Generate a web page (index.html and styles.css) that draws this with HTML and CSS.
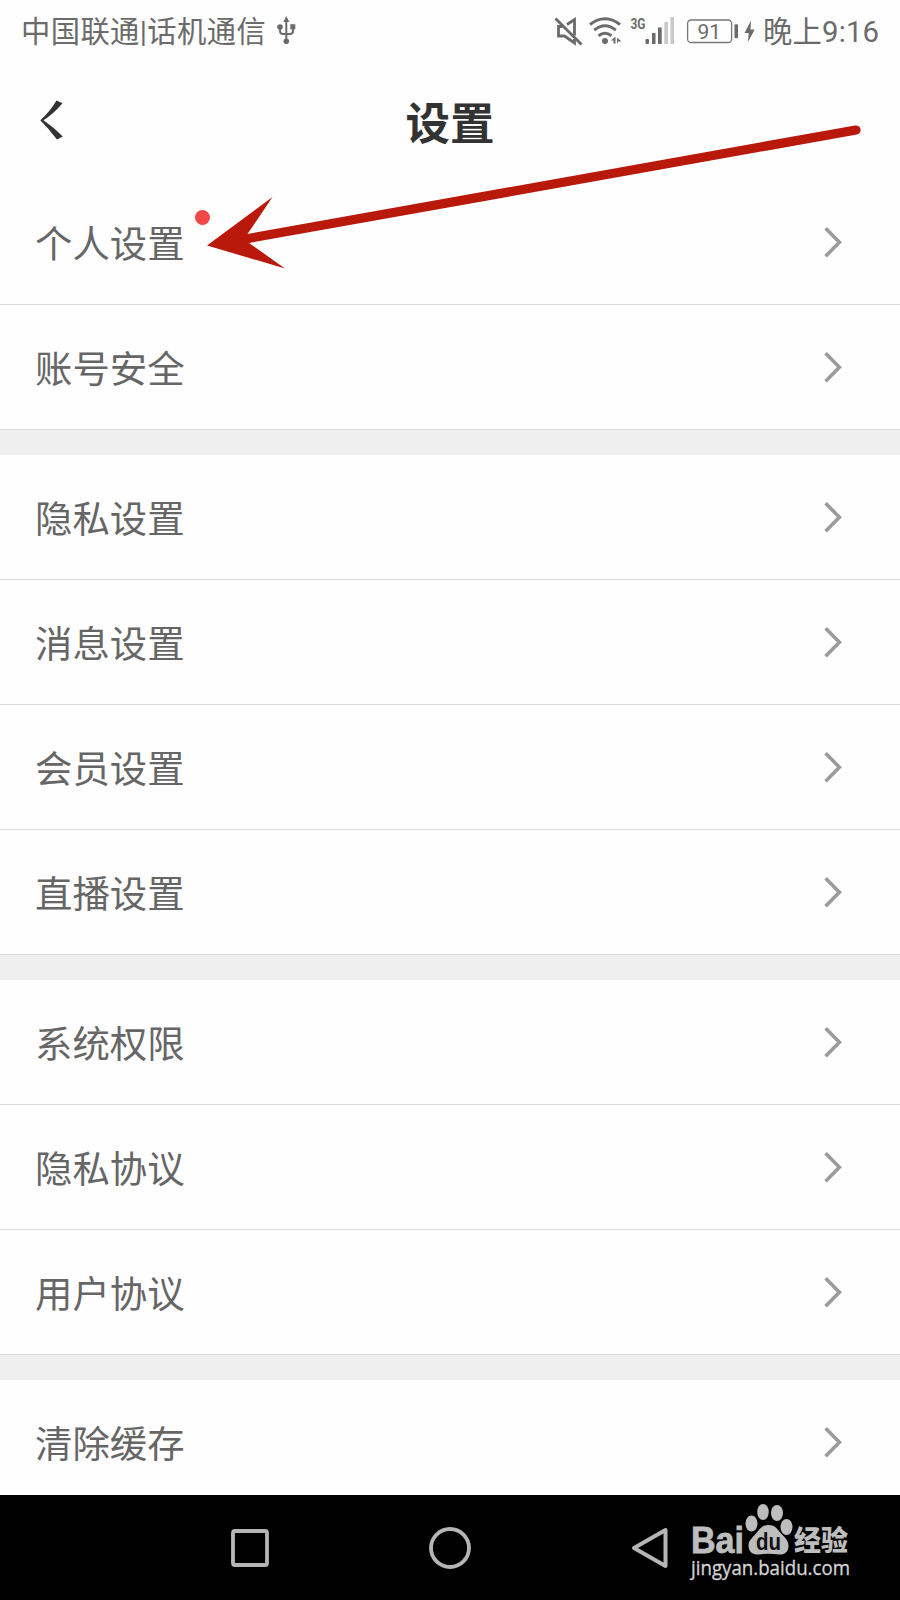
FILE: index.html
```
<!DOCTYPE html>
<html lang="zh-CN">
<head>
<meta charset="utf-8">
<title>设置</title>
<link rel="stylesheet" href="styles.css">
</head>
<body>
<svg class="defs" width="0" height="0"><symbol id="chev" viewBox="0 0 20 34"><path d="M1.600 3.200 15.400 17.200 1.600 31.200" fill="none" stroke="#9b9b9b" stroke-width="3.600"/></symbol></svg>
<div class="screen">
  <header class="status">
    <span class="carrier">中国联通|话机通信</span>
    <svg class="usb" viewBox="276 15 22 32" width="22" height="32" fill="none" stroke="#6b6b6b" stroke-width="2"><path d="M286.3 41V19M280 27v4q0 3 3 3h7q3 0 3-3v-4"/><g fill="#6b6b6b" stroke="none"><path d="M286.3 16l3 6h-6zM290.3 24.200h5v5h-5z"/><circle cx="280" cy="27" r="2.800"/><circle cx="286.300" cy="41.300" r="2.800"/></g></svg>
    <svg class="signals" viewBox="550 10 210 40" width="210" height="40">
      <g fill="none" stroke="#6b6b6b" stroke-width="2.800"><path d="M555.500 17.500 581.500 43.500"/><path d="M567 23.500l7.500-5V34.500M562.500 25.500h-4v9.500h6l10 7V38"/>
      <path d="M590 23.500q15-11.500 30 0M594.200 29.200q10.800-9 21.600 0M598.500 34.700q6.500-5 13 0" stroke-width="3"/></g>
      <circle cx="605" cy="40" r="3" fill="#6b6b6b"/><path d="M611 39.500l4.500-4V42.500h-2v-3zM617 36.500v6.500l1.300-2.500h3.200z" fill="#6b6b6b"/>
      <text class="net" x="630.500" y="28" textLength="15" lengthAdjust="spacingAndGlyphs">3G</text>
      <g fill="#6b6b6b"><rect x="645.500" y="38" width="3.500" height="5" rx="1"/><rect x="652" y="32" width="3.500" height="11"/><rect x="658" y="26.500" width="3.700" height="16.500"/></g>
      <g fill="#c9c9c9"><rect x="664.300" y="21" width="3.700" height="22"/><rect x="670.500" y="16" width="3.500" height="27"/></g>
      <rect x="687.600" y="19" width="44" height="22.500" rx="3.500" fill="none" stroke="#777" stroke-width="1.300"/>
      <text class="pct" x="697.500" y="37.800" textLength="23.500" lengthAdjust="spacingAndGlyphs">91</text>
      <rect x="734.500" y="23.300" width="3.500" height="14" rx="1" fill="#6b6b6b"/><path d="M751 19.500l-6.500 12.500h4.200l-.700 9 6.700-12.500h-4.200z" fill="#6b6b6b"/>
    </svg>
    <span class="time">晚上9:16</span>
  </header>
  <div class="titlebar">
    <svg class="back" viewBox="38 99 26 44" width="26" height="44"><path d="M56.500 100.500l6 2.800Q54 113.500 43.500 120.300 54 127.500 62.800 136.500L57 139.500Q49 129 40.300 120.300 50 111.500 56.500 100.500z" fill="#333"/></svg>
    <h1>设置</h1>
  </div>
  <main>
    <section>
      <div class="row"><span class="label">个人设置<i class="dot"></i></span><svg class="chev"><use href="#chev"/></svg></div>
      <div class="row"><span class="label">账号安全</span><svg class="chev"><use href="#chev"/></svg></div>
    </section>
    <section>
      <div class="row"><span class="label">隐私设置</span><svg class="chev"><use href="#chev"/></svg></div>
      <div class="row"><span class="label">消息设置</span><svg class="chev"><use href="#chev"/></svg></div>
      <div class="row"><span class="label">会员设置</span><svg class="chev"><use href="#chev"/></svg></div>
      <div class="row"><span class="label">直播设置</span><svg class="chev"><use href="#chev"/></svg></div>
    </section>
    <section>
      <div class="row"><span class="label">系统权限</span><svg class="chev"><use href="#chev"/></svg></div>
      <div class="row"><span class="label">隐私协议</span><svg class="chev"><use href="#chev"/></svg></div>
      <div class="row"><span class="label">用户协议</span><svg class="chev"><use href="#chev"/></svg></div>
    </section>
    <section>
      <div class="row"><span class="label">清除缓存</span><svg class="chev"><use href="#chev"/></svg></div>
    </section>
  </main>
  <nav class="nav">
    <svg viewBox="230 1525 40 44" width="40" height="44"><rect x="233" y="1530" width="34" height="34" rx="2" fill="none" stroke="#b5b5b5" stroke-width="3.800"/></svg>
    <svg viewBox="428 1525 44 44" width="44" height="44"><circle cx="450" cy="1547" r="19" fill="none" stroke="#b5b5b5" stroke-width="3.800"/></svg>
    <svg viewBox="630 1525 40 44" width="40" height="44"><path d="M634 1547 665.500 1529v36z" fill="none" stroke="#b5b5b5" stroke-width="4" stroke-linejoin="round"/></svg>
  </nav>
  <svg class="watermark" viewBox="680 1495 190 95" width="190" height="95">
    <g fill="#bdbdbd">
      <text class="bai" x="691" y="1553" textLength="53" lengthAdjust="spacingAndGlyphs">Bai</text>
      <ellipse cx="751.500" cy="1523.500" rx="6" ry="8"/><ellipse cx="763" cy="1512" rx="5.800" ry="8"/><ellipse cx="777" cy="1513" rx="6" ry="8"/><ellipse cx="786.500" cy="1527" rx="6" ry="8"/>
      <path d="M768.500 1525c7 0 9.500 5 13 9 4 4 7 7 7 12 0 6-4 9-9.500 8.500q-10.500-1.500-21 0c-6 .5-9.500-3.500-9.500-9 0-5 4-8 7.500-12 3.500-4 5.500-8.500 12.500-8.500z"/>
      <text class="jing" x="794" y="1551" textLength="54" lengthAdjust="spacingAndGlyphs">经验</text>
      <text class="url" x="691" y="1575" textLength="159" lengthAdjust="spacingAndGlyphs">jingyan.baidu.com</text>
    </g>
    <text class="du" x="756" y="1549.500" textLength="25" lengthAdjust="spacingAndGlyphs">du</text>
  </svg>
  <svg class="arrow" viewBox="200 120 670 155" width="670" height="155"><path d="M207 245.500 272.500 197 247.500 234 855 125.500A4.500 4.500 0 0 1 857 134.500L249 243 285 268.500z" fill="#b9190a"/></svg>
</div>
</body>
</html>
```
FILE: styles.css
```
* { box-sizing: border-box; }
body { margin: 0; background: #fefefe; font-family: Roboto, "Noto Sans CJK SC", sans-serif; }
.defs { position: absolute; }
.screen { position: relative; width: 900px; height: 1600px; overflow: hidden; display: flex; flex-direction: column; background: #fefefe; }
.status { height: 62px; flex: none; display: flex; align-items: center; padding: 0 20px 0 21px; color: #6b6b6b; font-size: 29.3px; white-space: nowrap; }
.carrier { width: 255px; flex: none; padding-bottom: 4px; letter-spacing: .4px; }
.usb { flex: none; }
.signals { margin-left: 252px; flex: none; }
.time { margin-left: 3px; padding-bottom: 4px; letter-spacing: .2px; }
.net { font: bold 14px Roboto, sans-serif; fill: #6b6b6b; }
.pct { font: 21px Roboto, sans-serif; fill: #6b6b6b; }
.titlebar { height: 118px; flex: none; display: grid; grid-template-columns: 26px 1fr 26px; align-items: center; padding: 0 38px; }
.titlebar h1 { margin: 0; padding-top: 7px; text-align: center; font-size: 44.5px; line-height: 60px; color: #333; font-weight: 700; }
main { flex: 1; min-height: 0; overflow: hidden; background: #efefef; display: flex; flex-direction: column; gap: 25px; }
section { flex: none; background: #fefefe; }
.row { height: 125px; display: flex; align-items: center; justify-content: space-between; padding: 0 56px 0 35px; border-bottom: 1px solid #dadada; }
.label { position: relative; padding-top: 6px; font-size: 37.4px; line-height: 54px; color: #666; }
.dot { position: absolute; left: 160px; top: -2px; width: 15px; height: 15px; border-radius: 50%; background: #f04848; }
.chev { width: 20px; height: 34px; flex: none; }
.nav { height: 105px; flex: none; background: #000; display: flex; align-items: center; gap: 158px; padding-left: 230px; }
.watermark { position: absolute; left: 680px; top: 1495px; }
.bai { font: bold 36px "Liberation Sans", sans-serif; stroke: #bdbdbd; stroke-width: .8px; }
.jing { font: 900 28px "Noto Sans CJK SC", sans-serif; }
.url { font: 20px "Open Sans", sans-serif; fill: #d4d4d4; stroke: #d4d4d4; stroke-width: .3px; }
.du { font: bold 23px "Liberation Sans", sans-serif; fill: #111; }
.arrow { position: absolute; left: 200px; top: 120px; }
```
